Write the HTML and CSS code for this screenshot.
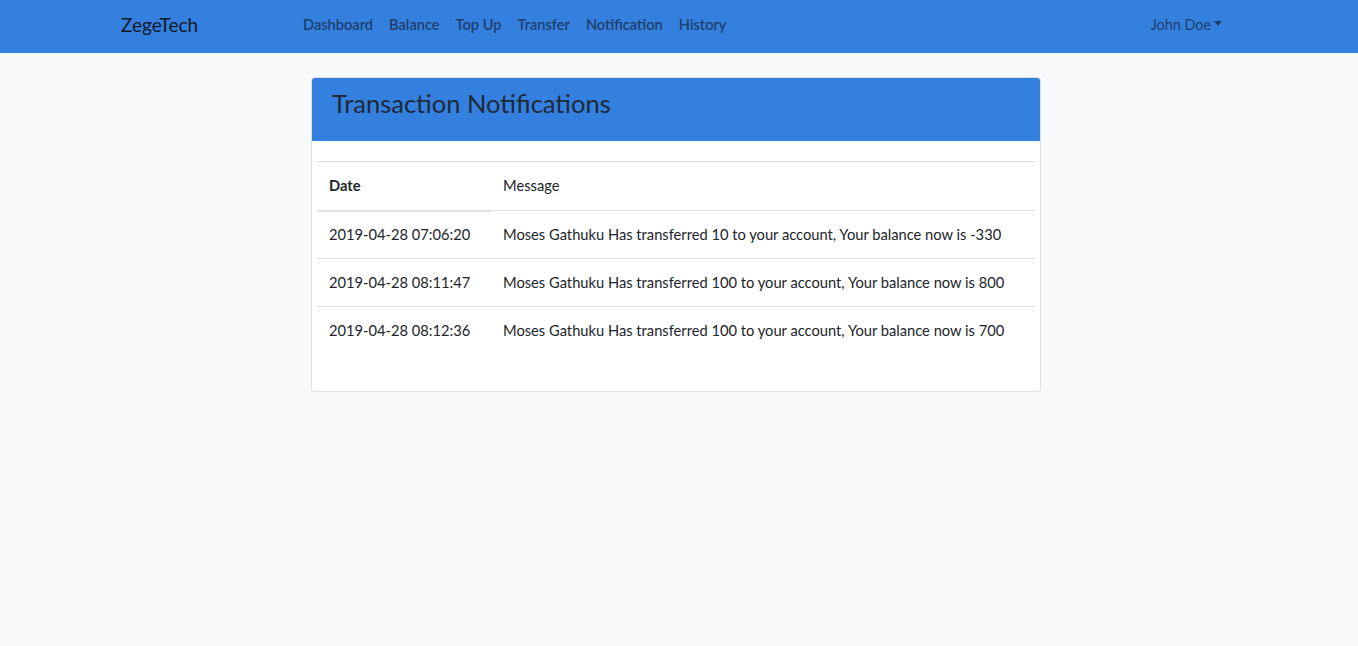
FILE: index.html
```html
<!DOCTYPE html>
<html>
<head>
<meta charset="utf-8">
<link rel="stylesheet" href="styles.css">
</head>
<body>
<nav class="navbar">
  <div class="nav-container">
    <a class="brand">ZegeTech</a>
    <ul class="nav-links">
      <li><a>Dashboard</a></li>
      <li><a>Balance</a></li>
      <li><a>Top Up</a></li>
      <li><a>Transfer</a></li>
      <li><a>Notification</a></li>
      <li><a>History</a></li>
    </ul>
    <div class="user">John Doe<span class="caret"></span></div>
  </div>
</nav>
<main class="main">
  <div class="card">
    <div class="card-header"><h1>Transaction Notifications</h1></div>
    <div class="card-body">
      <table class="table">
        <tr class="head"><th>Date</th><td>Message</td></tr>
        <tr><td>2019-04-28 07:06:20</td><td>Moses Gathuku Has transferred 10 to your account, Your balance now is -330</td></tr>
        <tr><td>2019-04-28 08:11:47</td><td>Moses Gathuku Has transferred 100 to your account, Your balance now is 800</td></tr>
        <tr><td>2019-04-28 08:12:36</td><td>Moses Gathuku Has transferred 100 to your account, Your balance now is 700</td></tr>
      </table>
    </div>
  </div>
</main>
</body>
</html>
```
FILE: styles.css
```css
* { box-sizing: border-box; }
body {
  margin: 0;
  background: #f8fafc;
  font-family: "Lato", "Open Sans", sans-serif;
  font-size: 14.4px;
  color: #212529;
  line-height: 1.6;
}
.navbar {
  background: #3380df;
  height: 53px;
}
.nav-container {
  width: 1140px;
  margin: 0 auto;
  padding: 0 15px 3px;
  height: 100%;
  display: flex;
  align-items: center;
}
.brand {
  font-size: 19px;
  color: #111827;
  width: 182px;
  margin-left: -3px;
  padding-top: 1px;
}
.nav-links {
  list-style: none;
  margin: 0;
  padding: 0;
  display: flex;
  gap: 16px;
  flex: 1;
  font-size: 14.6px;
}
.nav-links a {
  color: #1f3e6c;
  font-weight: 600;
}
.user {
  color: #1f3e6c;
  margin-right: 12px;
  display: flex;
  align-items: center;
}
.caret {
  display: inline-block;
  margin-left: 3px;
  border-top: 5px solid #1f3e6c;
  border-left: 4.5px solid transparent;
  border-right: 4.5px solid transparent;
  margin-top: -2px;
}
.main {
  padding-top: 24px;
  padding-right: 6px;
  display: flex;
  justify-content: center;
}
.card {
  width: 730px;
  background: #fff;
  border: 1px solid rgba(0,0,0,.125);
  border-radius: 4px;
  overflow: hidden;
}
.card-header {
  background: #3380df;
  height: 63px;
  padding: 0 20px 4px;
  display: flex;
  align-items: center;
}
.card-header h1 {
  margin: 0;
  font-weight: 400;
  font-size: 25.5px;
  color: #1f2937;
  padding-bottom: 8px;
}
.card-body {
  padding: 20px 5px 36px;
  font-size: 14.7px;
}
.table {
  width: 100%;
  border-collapse: collapse;
}
.table th, .table td {
  text-align: left;
  padding: 0 12px;
  height: 48px;
  border-top: 1px solid #dee2e6;
  vertical-align: middle;
}
.table tr.head th, .table tr.head td { height: 49px; }
.table th {
  width: 174px;
  font-weight: 700;
  border-bottom: 2px solid #dee2e6;
}
.table tr.head td { border-bottom: 1px solid #dee2e6; }
```
